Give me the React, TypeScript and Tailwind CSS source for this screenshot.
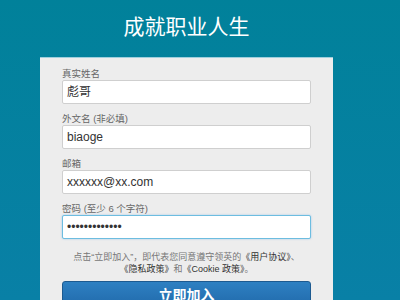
import React from "react";

const font = { fontFamily: '"Liberation Sans", "Noto Sans CJK SC", sans-serif' };

function Field({ label, value, focus }: { label: string; value: string; focus?: boolean }) {
  return (
    <div className="flex flex-col">
      <div className="text-[9.5px] leading-[12px] text-[#666]">{label}</div>
      <div
        className={
          "h-[24px] w-[249px] rounded-[2px] bg-white border flex items-center px-[4px] text-[12px] text-[#333] " +
          (focus ? "border-[#6dbde0] shadow-[0_0_2px_rgba(102,175,233,0.6)]" : "border-[#cfcfcf]")
        }
      >
        {value}
      </div>
    </div>
  );
}

export default function App() {
  return (
    <div
      className="w-[400px] h-[300px] overflow-hidden bg-gradient-to-b from-[#01819a] to-[#0980a6]"
      style={font}
    >
      <div className="ml-[40px] w-[293px] flex flex-col">
        <div className="h-[57px] flex items-center justify-center text-white text-[21px] leading-none pb-[4px]">
          成就职业人生
        </div>
        <div className="bg-[#ededed] border-t border-[#9fcfdd] px-[22px] pt-[10px] h-[260px] flex flex-col">
          <div className="flex flex-col gap-[9px]">
            <Field label="真实姓名" value="彪哥" />
            <Field label="外文名 (非必填)" value="biaoge" />
            <Field label="邮箱" value="xxxxxx@xx.com" />
            <Field label="密码 (至少 6 个字符)" value="•••••••••••••" focus />
          </div>
          <div className="mt-[12px] text-center text-[9px] leading-[12px] text-[#777]">
            <div>
              点击“立即加入”，即代表您同意遵守领英的<span className="text-[#333]">《用户协议》</span>、
            </div>
            <div>
              <span className="text-[#333]">《隐私政策》</span>和<span className="text-[#333]">《Cookie 政策》</span>。
            </div>
          </div>
          <div className="mt-[6px] h-[28px] w-[249px] rounded-[3px] border border-[#1d5a90] bg-gradient-to-b from-[#2e80c2] to-[#2069aa] flex items-start justify-center pt-[3px] text-white text-[14px] font-bold">
            立即加入
          </div>
        </div>
      </div>
    </div>
  );
}
